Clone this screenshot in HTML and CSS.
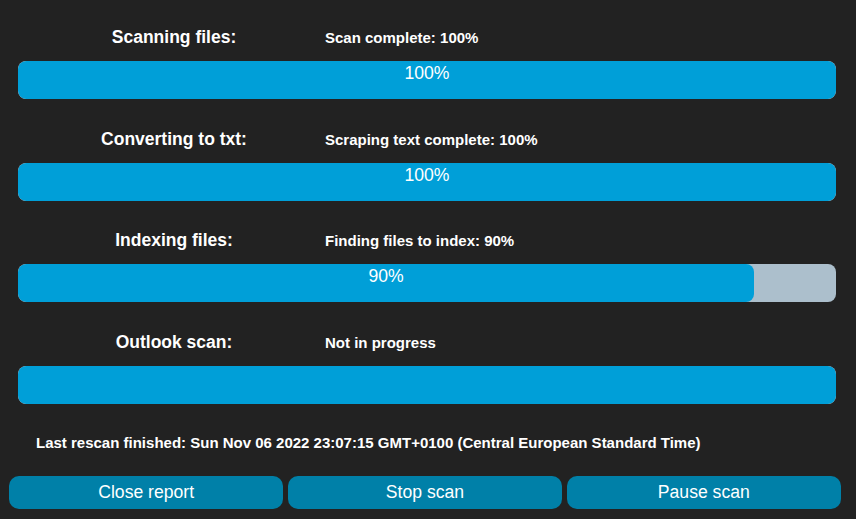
FILE: index.html
```html
<!DOCTYPE html>
<html>
<head>
<meta charset="utf-8">
<link rel="stylesheet" href="styles.css">
</head>
<body>
<div class="report">
  <div class="sections">
    <div class="section">
      <div class="head"><span class="title">Scanning files:</span><span class="status">Scan complete: 100%</span></div>
      <div class="track"><div class="fill" style="width:100%">100%</div></div>
    </div>
    <div class="section">
      <div class="head"><span class="title">Converting to txt:</span><span class="status">Scraping text complete: 100%</span></div>
      <div class="track"><div class="fill" style="width:100%">100%</div></div>
    </div>
    <div class="section">
      <div class="head"><span class="title">Indexing files:</span><span class="status">Finding files to index: 90%</span></div>
      <div class="track"><div class="fill" style="width:90%">90%</div></div>
    </div>
    <div class="section">
      <div class="head"><span class="title">Outlook scan:</span><span class="status">Not in progress</span></div>
      <div class="track"><div class="fill" style="width:100%"></div></div>
    </div>
  </div>
  <div class="last">Last rescan finished: Sun Nov 06 2022 23:07:15 GMT+0100 (Central European Standard Time)</div>
  <div class="buttons">
    <button class="btn">Close report</button>
    <button class="btn">Stop scan</button>
    <button class="btn">Pause scan</button>
  </div>
</div>
</body>
</html>
```
FILE: styles.css
```css
html, body {
  margin: 0;
  padding: 0;
  background: #222222;
  color: #ffffff;
  font-family: "Liberation Sans", Arial, sans-serif;
}
body {
  width: 856px;
  height: 519px;
  overflow: hidden;
}
.report {
  display: flex;
  flex-direction: column;
}
.sections {
  display: flex;
  flex-direction: column;
  gap: 19.7px;
  padding: 17px 20px 0 18px;
}
.section {
  display: flex;
  flex-direction: column;
}
.head {
  height: 44px;
  box-sizing: border-box;
  padding-top: 10px;
  display: grid;
  grid-template-columns: 307px 1fr;
  align-items: baseline;
  line-height: 20px;
}
.title {
  font-size: 17.5px;
  font-weight: bold;
  text-align: center;
  padding-left: 5px;
}
.status {
  font-size: 15px;
  font-weight: bold;
}
.track {
  height: 38px;
  background: #acbfcc;
  border-radius: 8px;
  overflow: hidden;
}
.fill {
  height: 100%;
  background: #009fd8;
  border-radius: 8px;
  box-sizing: border-box;
  padding-top: 3px;
  font-size: 17.6px;
  line-height: 18px;
  text-align: center;
}
.last {
  margin-top: 29.7px;
  padding-left: 36px;
  font-size: 15px;
  font-weight: bold;
  line-height: 18px;
}
.buttons {
  margin-top: 24.2px;
  padding: 0 15px 0 9px;
  display: grid;
  grid-template-columns: 1fr 1fr 1fr;
  gap: 4.5px;
}
.btn {
  height: 33px;
  border: none;
  border-radius: 10px;
  background: #0080a8;
  color: #ffffff;
  font-family: "Liberation Sans", Arial, sans-serif;
  font-size: 17.6px;
  padding: 0;
}
```
